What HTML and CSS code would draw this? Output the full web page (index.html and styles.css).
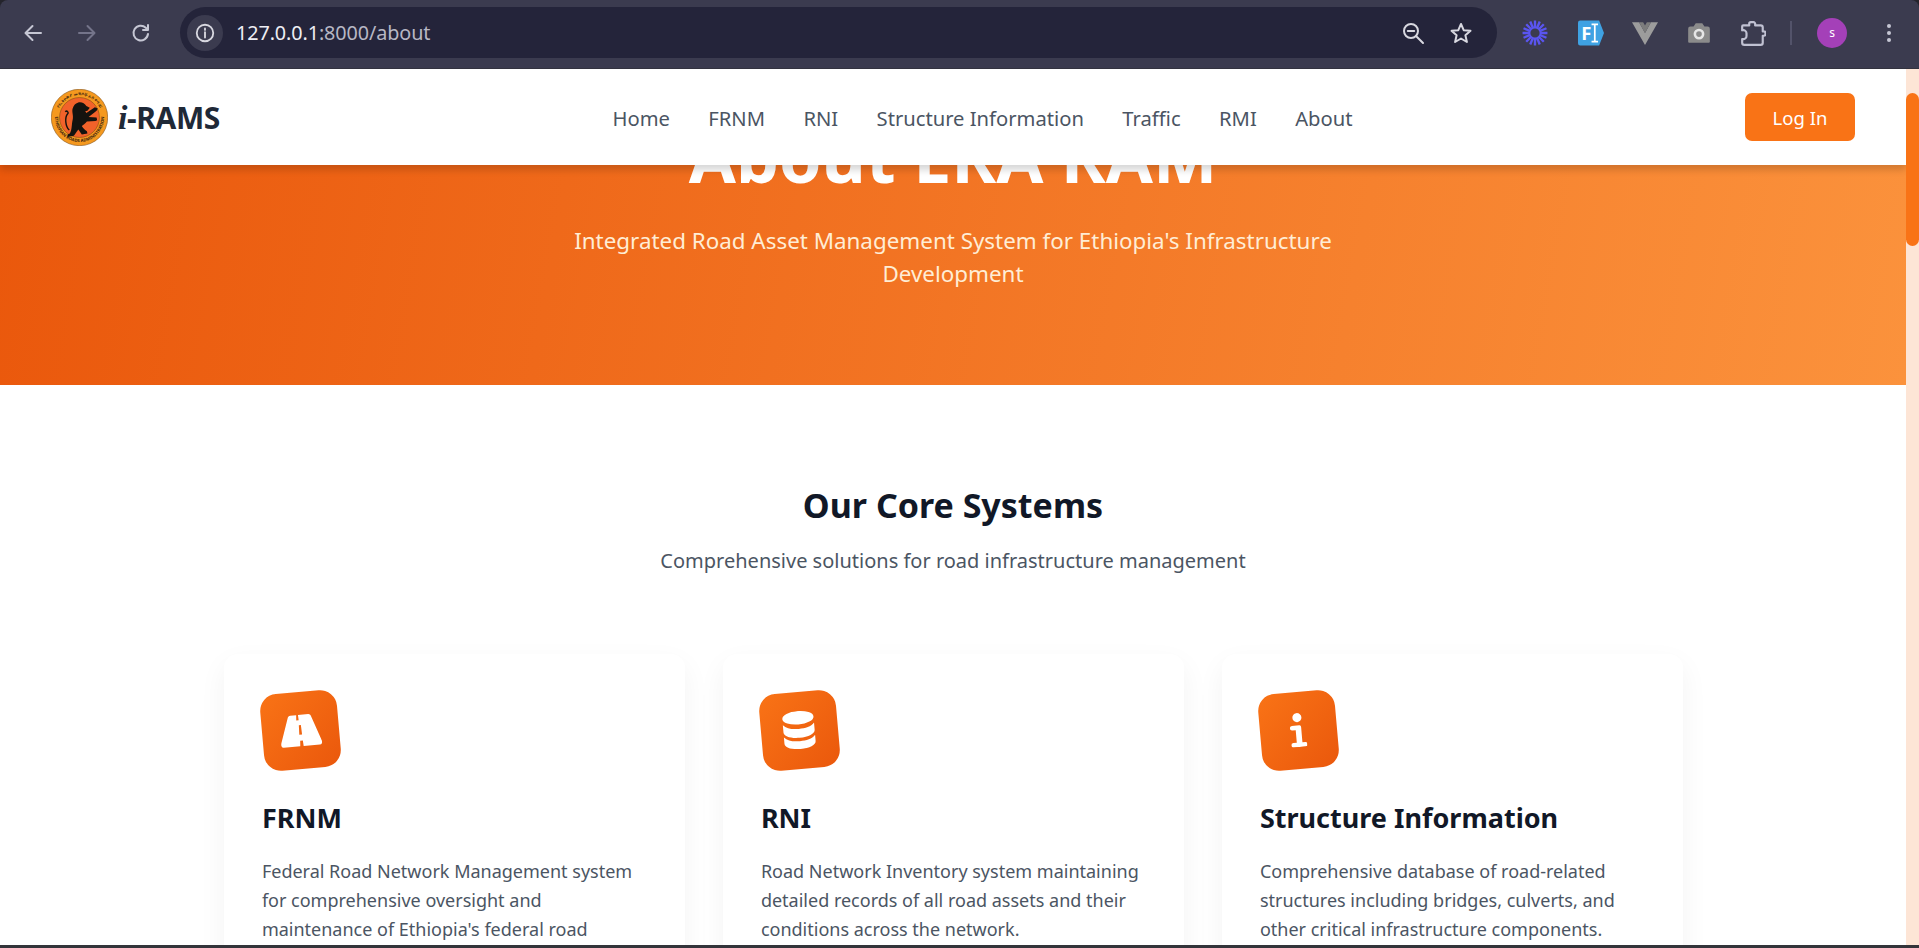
FILE: index.html
```html
<!DOCTYPE html>
<html lang="en">
<head>
<meta charset="utf-8">
<title>About ERA RAM</title>
<link rel="stylesheet" href="styles.css">
</head>
<body>
<div class="toolbar">
  <div class="nav-btns">
    <svg class="tb-icon" viewBox="0 0 24 24"><path d="M20 12H5M11.500 5 4.500 12l7 7" class="st-light"/></svg>
    <svg class="tb-icon" viewBox="0 0 24 24"><path d="M4 12h15M12.500 5l7 7-7 7" class="st-dim"/></svg>
    <svg class="tb-icon" viewBox="0 0 24 24"><path d="M19 13a7.300 7.300 0 1 1-2.200-6.200L19 9M19 4v5h-5" class="st-light"/></svg>
  </div>
  <div class="omnibox">
    <span class="site-info"><svg class="info-icon" viewBox="0 0 24 24"><circle cx="12" cy="12" r="9" class="st-bright"/><path d="M12 11v6M12 7v1.600" class="st-bright"/></svg></span>
    <span class="url"><span class="url-host">127.0.0.1</span>:8000/about</span>
    <span class="omni-right">
      <svg class="omni-icon" viewBox="0 0 24 24"><circle cx="10" cy="10" r="7" class="st-bright"/><path d="M6.800 10h6.400M15 15l7 7" class="st-bright"/></svg>
      <svg class="omni-icon" viewBox="0 0 24 24"><path d="m12 3 2.700 6.200 6.800.6-5.100 4.500 1.500 6.700-5.900-3.500L6.100 21l1.500-6.700-5.100-4.500 6.800-.6z" class="st-bright"/></svg>
    </span>
  </div>
  <div class="extensions">
    <svg class="ext-icon spark-icon" viewBox="0 0 24 24"><g class="spark"><path d="M12 .5V23.500M.5 12H23.500M3.900 3.900 20.100 20.100M20.100 3.900 3.900 20.100M7.600 1.400 16.400 22.600M16.400 1.400 7.600 22.600M1.400 7.600 22.600 16.400M1.400 16.400 22.600 7.600"/></g><circle cx="12" cy="12" r="5" class="spark-hole"/></svg>
    <svg class="ext-icon" viewBox="0 0 24 24"><path d="M0 2.500A2 2 0 0 1 2 .5H19.500L24 12l-4.500 11.500H2a2 2 0 0 1-2-2z" class="fi-bg"/><text x="3" y="18" class="fi-text">F</text><path d="M12.500 4h6M12.500 20h6M15.500 4v16" class="fi-cursor"/></svg>
    <svg class="ext-icon" viewBox="0 0 24 24"><path d="M0 2h6.500L12 12 17.500 2H24L12 23z" class="v-outer"/><path d="M6.500 2h3.800L12 5l1.700-3h3.800L12 12z" class="v-inner"/></svg>
    <svg class="ext-icon" viewBox="0 0 24 24"><path d="M2 8a2 2 0 0 1 2-2h3l2-3h6l2 3h3a2 2 0 0 1 2 2v12a1 1 0 0 1-1 1H3a1 1 0 0 1-1-1z" class="cam"/><circle cx="12" cy="13" r="3.800" class="cam-lens"/></svg>
    <svg class="ext-icon puzzle" viewBox="0 0 24 24"><path d="M3 5H8.500V3.500A1.500 1.500 0 0 1 10 2h2.500A1.500 1.500 0 0 1 14 3.500V5h5a2 2 0 0 1 2 2v3.500h1a1.500 1.500 0 0 1 1.500 1.500v1a1.500 1.500 0 0 1-1.500 1.500h-1V21a2 2 0 0 1-2 2H4a2 2 0 0 1-2-2V17.500A3 3 0 0 0 6 14.500V12.500A3 3 0 0 0 2 9.500V6a1 1 0 0 1 1-1z" class="st-puzzle"/></svg>
    <span class="tb-divider"></span>
    <span class="avatar">s</span>
    <svg class="menu-icon" viewBox="0 0 6 24"><circle cx="3" cy="5" r="2"/><circle cx="3" cy="12" r="2"/><circle cx="3" cy="19" r="2"/></svg>
  </div>
</div>

<div class="frame">
  <div class="page">
    <header class="site-nav">
      <a class="brand">
        <svg class="logo" viewBox="0 0 100 100">
          <circle cx="50" cy="50" r="49.500" class="logo-ring"/>
          <circle cx="50" cy="50" r="35" class="logo-core"/>
          <defs><path id="logoTop" d="M11 50a39 39 0 0 1 78 0"/><path id="logoBottom" d="M7 50a43 43 0 0 0 86 0"/></defs>
          <text class="logo-text"><textPath href="#logoTop" startOffset="50%" text-anchor="middle">የኢትዮጵያ መንገዶች አስተዳደር</textPath></text>
          <text class="logo-text"><textPath href="#logoBottom" startOffset="50%" text-anchor="middle">ETHIOPIAN ROADS ADMINISTRATION</textPath></text>
          <path class="lion" d="M47 24C53 22 59 25 62 30L68 33 64 38 60 39 62 42 77 32 82 34 80 38 66 49 80 50 81 55 78 56 63 57C60 61 56 63 54 65 56 69 60 72 63 74L64 78 54 80 48 71C44 76 42 80 40 82L29 84 29 80 33 78C37 72 36 62 38 54 40 46 36 40 38 34 40 28 43 25 47 24Z"/>
          <path class="lion-tail" d="M32 72C25 66 24 50 29 44 32 41 28 37 25 40"/>
        </svg>
        <span class="brand-name"><i class="brand-i">i</i>-RAMS</span>
      </a>
      <nav class="nav-links">
        <a>Home</a><a>FRNM</a><a>RNI</a><a>Structure Information</a><a>Traffic</a><a>RMI</a><a>About</a>
      </nav>
      <a class="login">Log In</a>
    </header>

    <section class="hero">
      <h1>About ERA RAM</h1>
      <p>Integrated Road Asset Management System for Ethiopia's Infrastructure Development</p>
    </section>

    <section class="systems">
      <h2>Our Core Systems</h2>
      <p class="systems-sub">Comprehensive solutions for road infrastructure management</p>
      <div class="cards">
        <article class="card">
          <div class="card-icon"><svg class="glyph-road" viewBox="3 6 34 26"><path class="road" d="M12.500 6H17.500L17.200 10.500H19.200L19 6H27.500C28.500 6 29.300 6.700 29.600 7.600L37 29C37.500 30.700 36.500 32 35 32H21.500L21.200 27.500H19L18.700 32H5C3.500 32 2.500 30.700 3 29L10.400 7.600C10.700 6.700 11.500 6 12.500 6ZM19 14.500 18.700 22.500H21L20.700 14.500Z"/></svg></div>
          <h3>FRNM</h3>
          <p>Federal Road Network Management system for comprehensive oversight and maintenance of Ethiopia's federal road infrastructure.</p>
        </article>
        <article class="card">
          <div class="card-icon"><svg class="glyph-db" viewBox="6 3 28 34"><ellipse class="road" cx="20" cy="9" rx="14" ry="6"/><path class="road" d="M6 14.500C9 18 14 19 20 19S31 18 34 14.500V21C34 24.500 28 27 20 27S6 24.500 6 21Z"/><path class="road" d="M6 25.500C9 29 14 30 20 30S31 29 34 25.500V31C34 34.500 28 37 20 37S6 34.500 6 31Z"/></svg></div>
          <h3>RNI</h3>
          <p>Road Network Inventory system maintaining detailed records of all road assets and their conditions across the network.</p>
        </article>
        <article class="card">
          <div class="card-icon"><svg class="glyph-info" viewBox="13 4 14 30"><circle class="road" cx="20" cy="8" r="4"/><path class="road" d="M15 15H21.500A1.500 1.500 0 0 1 23 16.500V30H25.500A1.800 1.800 0 0 1 25.500 34H15A1.800 1.800 0 0 1 15 30H18V19H15A2 2 0 0 1 15 15Z"/></svg></div>
          <h3>Structure Information</h3>
          <p>Comprehensive database of road-related structures including bridges, culverts, and other critical infrastructure components.</p>
        </article>
      </div>
    </section>
  </div>
  <div class="scrollbar"><span class="thumb"></span></div>
</div>
<div class="bottom-edge"></div>
</body>
</html>
```

FILE: styles.css
```css
* { box-sizing: border-box; }
html, body { margin: 0; height: 100%; overflow: hidden; }
body {
  display: flex;
  flex-direction: column;
  height: 948px;
  background: #24242c;
  font-family: "Noto Sans", "Open Sans", sans-serif;
}

/* Browser toolbar */
.toolbar {
  height: 69px;
  flex: none;
  display: flex;
  align-items: center;
  padding: 0 20px 3px 21px;
  background: #3b3b4f;
  border-radius: 8px 8px 0 0;
  border-bottom: 1px solid #33333f;
}
.nav-btns { display: flex; gap: 30px; margin-right: 27px; }
.tb-icon { width: 24px; height: 24px; fill: none; }
.st-light, .st-dim, .st-bright {
  fill: none;
  stroke-width: 2;
  stroke-linecap: round;
  stroke-linejoin: round;
}
.st-light { stroke: #c6c7d4; }
.st-dim { stroke: #74748a; }
.st-bright { stroke: #d8d8e0; }
.omnibox {
  width: 1317px;
  height: 51px;
  display: flex;
  align-items: center;
  padding: 0 24px 0 7px;
  background: #24243a;
  border-radius: 26px;
}
.site-info {
  width: 36px;
  height: 36px;
  display: flex;
  align-items: center;
  justify-content: center;
  background: #3b3b4f;
  border-radius: 50%;
  margin-right: 13px;
}
.info-icon { width: 22px; height: 22px; }
.url { font-size: 19.800px; color: #b7b7c4; letter-spacing: -.1px; }
.url-host { color: #eeeef4; }
.omni-right { margin-left: auto; display: flex; gap: 24px; }
.omni-icon { width: 24px; height: 24px; }
.extensions { display: flex; align-items: center; margin-left: 25px; flex: 1; }
.ext-icon { width: 26px; height: 26px; margin-right: 28px; flex: none; }
.spark-icon { margin-right: 30px; }
.spark path { stroke: #5a55f0; stroke-width: 2.200; fill: none; }
.spark-hole { fill: #3b3b4f; stroke: #5a55f0; stroke-width: 1.500; }
.fi-bg { fill: #3fa2e3; }
.fi-text { fill: #fff; font: 700 17px "Noto Sans", sans-serif; }
.fi-cursor { stroke: #fff; stroke-width: 1.600; fill: none; }
.v-outer { fill: #9c9c9c; }
.v-inner { fill: #7c7c7c; }
.cam { fill: #8b8b8b; }
.cam-lens { fill: none; stroke: #e6e6e6; stroke-width: 2.400; }
.st-puzzle { fill: none; stroke: #c0c1d2; stroke-width: 2; stroke-linejoin: round; }
.puzzle { margin-right: 24px; }
.tb-divider { width: 2px; height: 24px; background: #53536a; margin-right: 25px; }
.avatar {
  width: 30px;
  height: 30px;
  flex: none;
  border-radius: 50%;
  background: #a440b8;
  color: #fff;
  font-size: 12px;
  display: flex;
  align-items: center;
  justify-content: center;
  margin-right: 39px;
}
.menu-icon { width: 6px; height: 24px; fill: #c6c7d4; flex: none; }

/* Page */
.frame { flex: 1; min-height: 0; display: flex; }
.page { flex: 1; min-width: 0; overflow: hidden; background: #fff; }
.scrollbar { width: 13px; flex: none; background: #fde5d6; padding-top: 24px; }
.thumb { display: block; height: 153px; background: #f97316; border-radius: 7px; }
.bottom-edge { height: 3px; flex: none; background: #33343a; }

.site-nav {
  position: relative;
  z-index: 2;
  height: 96px;
  display: flex;
  align-items: center;
  justify-content: space-between;
  padding: 0 51px;
  background: #fff;
  box-shadow: 0 5px 7px rgba(0, 0, 0, .16);
}
.brand { display: flex; align-items: center; gap: 10px; }
.logo { width: 57px; height: 57px; display: block; }
.logo-ring { fill: #f5991f; stroke: #7d4a10; stroke-width: 1; }
.logo-core { fill: #f2622a; stroke: #7d4a10; stroke-width: 1; }
.logo-text { font: 700 7.500px "Noto Sans", sans-serif; fill: #3a2410; }
.lion { fill: #15130f; }
.lion-tail { fill: none; stroke: #15130f; stroke-width: 2.500; }
.brand-name { font-size: 30px; font-weight: 700; color: #1f2937; letter-spacing: -.4px; }
.brand-i { font-family: "Liberation Serif", serif; font-weight: 700; font-size: 34px; }
.nav-links { display: flex; gap: 38.400px; font-size: 20.200px; color: #4b5563; padding-top: 2px; }
.login {
  width: 110px;
  height: 48px;
  display: flex;
  align-items: center;
  justify-content: center;
  background: #f97316;
  color: #fff;
  font-size: 18.500px;
  border-radius: 7px;
}

.hero {
  display: flow-root;
  height: 220px;
  text-align: center;
  color: #fff;
  background: linear-gradient(100deg, #ea580c, #fb923c);
}
.hero h1 {
  margin: -44px 0 0;
  font-size: 68.200px;
  line-height: 72px;
  font-weight: 700;
}
.hero p {
  width: 800px;
  margin: 31px auto 0;
  font-size: 22.400px;
  line-height: 33px;
  color: #ffedd5;
}

.systems { padding-top: 96px; text-align: center; }
.systems h2 {
  margin: 0;
  font-size: 34px;
  line-height: 48px;
  font-weight: 700;
  color: #111827;
}
.systems-sub {
  margin: 16px 0 0;
  font-size: 20px;
  line-height: 32px;
  color: #4b5563;
}
.cards {
  display: grid;
  grid-template-columns: repeat(3, 461px);
  column-gap: 38px;
  justify-content: center;
  margin-top: 77px;
  text-align: left;
}
.card {
  padding: 38.400px;
  background: #fff;
  border-radius: 14px;
  box-shadow: 0 10px 28px rgba(0, 0, 0, .05);
}
.card-icon {
  width: 76.800px;
  height: 76.800px;
  display: flex;
  align-items: center;
  justify-content: center;
  border-radius: 17px;
  background: linear-gradient(135deg, #f97316, #ea580c);
  transform: rotate(-5deg);
}
.glyph-road { width: 41px; height: 35px; }
.glyph-db { width: 34px; height: 38px; }
.glyph-info { width: 16px; height: 34px; }
.road { fill: #fff; }
.card h3 {
  margin: 29.800px 0 0;
  font-size: 27px;
  line-height: 38.400px;
  font-weight: 700;
  color: #111827;
}
.card p {
  margin: 20px 0 0;
  font-size: 18px;
  line-height: 28.800px;
  color: #4b5563;
}
```
